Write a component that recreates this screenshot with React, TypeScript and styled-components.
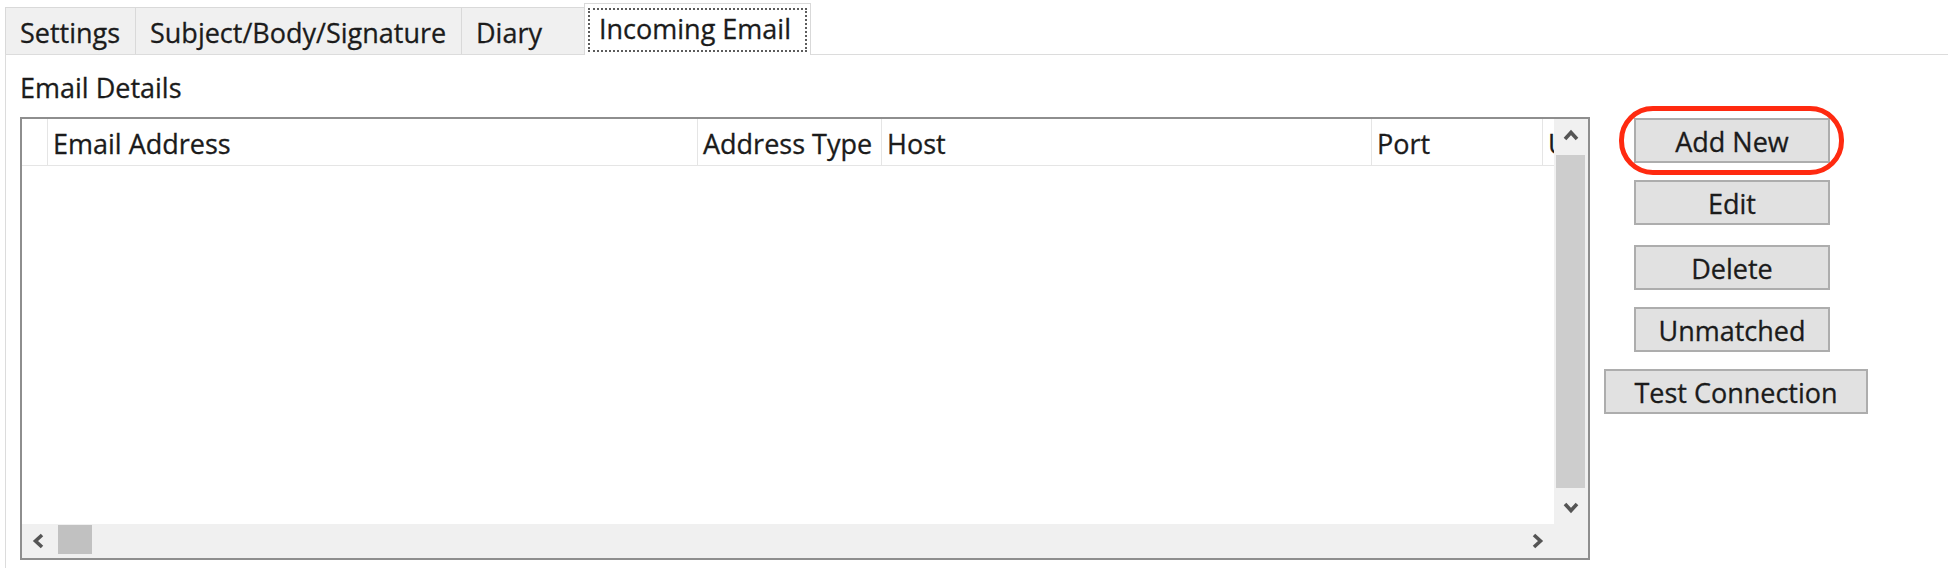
import React from 'react';
import styled, { createGlobalStyle } from 'styled-components';

const GlobalStyle = createGlobalStyle`
  html, body {
    margin: 0;
    padding: 0;
    background: #ffffff;
  }

  body {
    font-family: "Open Sans", "Noto Sans", sans-serif;
    font-size: 27px;
    color: #1b1b1b;
    -webkit-text-stroke: 0.3px #1b1b1b;
  }
`;

const Window = styled.div`
  width: 1948px;
  height: 568px;
  overflow: hidden;
  display: flex;
  flex-direction: column;
`;

const TabStrip = styled.div`
  display: flex;
  align-items: flex-end;
  height: 54px;
  padding-left: 5px;
  position: relative;
  z-index: 1;
`;

const Tab = styled.div<{ $width: number }>`
  box-sizing: border-box;
  width: ${p => p.$width}px;
  height: 47px;
  margin-right: -1px;
  padding: 7px 0 0 14px;
  background: #f0f0f0;
  border: 1px solid #d9d9d9;
  border-bottom: none;
  line-height: 36px;
  white-space: nowrap;
`;

const ActiveTab = styled.div<{ $width: number }>`
  box-sizing: border-box;
  width: ${p => p.$width}px;
  height: 52px;
  margin: 0 0 -1px -1px;
  padding: 4px 3px 3px 3px;
  background: #ffffff;
  border: 1px solid #d9d9d9;
  border-bottom: none;
  display: flex;
`;

const FocusBox = styled.div`
  flex: 1;
  border: 2px dotted #5c5c5c;
  padding: 1px 0 0 9px;
  line-height: 36px;
  white-space: nowrap;
`;

const Panel = styled.div`
  flex: 1;
  margin-left: 5px;
  border-top: 1px solid #dcdcdc;
  border-left: 1px solid #dcdcdc;
  padding: 15px 0 0 14px;
`;

const GroupLabel = styled.div`
  line-height: 36px;
  margin-bottom: 11px;
`;

const Body = styled.div`
  display: flex;
  align-items: flex-start;
  gap: 14px;
`;

const ListBox = styled.div`
  box-sizing: border-box;
  width: 1570px;
  height: 443px;
  border: 2px solid #8e8e8e;
  display: grid;
  grid-template-columns: 1fr 34px;
  grid-template-rows: 1fr 34px;
  background: #ffffff;
`;

const Grid = styled.div`
  overflow: hidden;
  background: #ffffff;
`;

const HeaderRow = styled.div`
  display: flex;
  height: 46px;
  border-bottom: 1px solid #e5e5e5;
`;

const HeaderCell = styled.div<{ $width: number; $first?: boolean }>`
  box-sizing: border-box;
  flex: 0 0 ${p => p.$width}px;
  display: flex;
  align-items: center;
  padding: 4px 0 0 5px;
  border-left: ${p => (p.$first ? 'none' : '1px solid #e5e5e5')};
  overflow: hidden;
  white-space: nowrap;
  line-height: 36px;
`;

const VScroll = styled.div`
  display: flex;
  flex-direction: column;
  background: #f0f0f0;
`;

const HScroll = styled.div`
  display: flex;
  background: #f0f0f0;
`;

const Corner = styled.div`
  background: #f0f0f0;
`;

const ArrowBox = styled.div<{ $size: number }>`
  flex: 0 0 ${p => p.$size}px;
  display: flex;
  align-items: center;
  justify-content: center;
`;

const VThumb = styled.div`
  height: 333px;
  margin: 2px 3px 0 2px;
  background: #cdcdcd;
`;

const HThumb = styled.div`
  width: 34px;
  margin: 1px 0 4px 2px;
  background: #c1c1c1;
`;

const Spacer = styled.div`
  flex: 1;
`;

const ButtonColumn = styled.div`
  width: 264px;
  padding-top: 1px;
  display: flex;
  flex-direction: column;
  align-items: flex-start;
  gap: 17px;
`;

const Button = styled.button<{ $wide?: boolean; $gapAbove?: number }>`
  box-sizing: border-box;
  width: ${p => (p.$wide ? 264 : 196)}px;
  height: 45px;
  margin-left: ${p => (p.$wide ? 0 : 30)}px;
  margin-top: ${p => p.$gapAbove || 0}px;
  padding: 2px 0 0;
  background: #e1e1e1;
  border: 2px solid #adadad;
  font-family: inherit;
  font-size: 27px;
  line-height: 36px;
  color: #1b1b1b;
  -webkit-text-stroke: 0.3px #1b1b1b;
`;

const Marked = styled.div`
  position: relative;
  margin-left: 30px;

  ${Button} {
    margin-left: 0;
  }

  &::after {
    content: '';
    position: absolute;
    top: -12px;
    bottom: -12px;
    left: -15px;
    right: -14px;
    border: 5px solid #ff2a10;
    border-radius: 34px;
    pointer-events: none;
  }
`;

type Dir = 'up' | 'down' | 'left' | 'right';

const chevronPoints: Record<Dir, string> = {
  up: '2,11 8,4.5 14,11',
  down: '2,5 8,11.5 14,5',
  left: '11,2 4.5,8 11,14',
  right: '5,2 11.5,8 5,14',
};

const Chevron = ({ dir }: { dir: Dir }) => (
  <svg width="16" height="16" viewBox="0 0 16 16">
    <polyline
      points={chevronPoints[dir]}
      fill="none"
      stroke="#555555"
      strokeWidth="3.6"
      strokeLinejoin="miter"
    />
  </svg>
);

const columns = [
  { title: '', width: 25 },
  { title: 'Email Address', width: 650 },
  { title: 'Address Type', width: 184 },
  { title: 'Host', width: 490 },
  { title: 'Port', width: 171 },
  { title: 'Username', width: 200 },
];

export default function App() {
  return (
    <>
      <GlobalStyle />
      <Window>
        <TabStrip>
          <Tab $width={131}>Settings</Tab>
          <Tab $width={327}>Subject/Body/Signature</Tab>
          <Tab $width={125}>Diary</Tab>
          <ActiveTab $width={227}>
            <FocusBox>Incoming Email</FocusBox>
          </ActiveTab>
        </TabStrip>
        <Panel>
          <GroupLabel>Email Details</GroupLabel>
          <Body>
            <ListBox>
              <Grid>
                <HeaderRow>
                  {columns.map((c, i) => (
                    <HeaderCell key={i} $width={c.width} $first={i === 0}>
                      {c.title}
                    </HeaderCell>
                  ))}
                </HeaderRow>
              </Grid>
              <VScroll>
                <ArrowBox $size={34}><Chevron dir="up" /></ArrowBox>
                <VThumb />
                <Spacer />
                <ArrowBox $size={35}><Chevron dir="down" /></ArrowBox>
              </VScroll>
              <HScroll>
                <ArrowBox $size={34}><Chevron dir="left" /></ArrowBox>
                <HThumb />
                <Spacer />
                <ArrowBox $size={34}><Chevron dir="right" /></ArrowBox>
              </HScroll>
              <Corner />
            </ListBox>
            <ButtonColumn>
              <Marked>
                <Button>Add New</Button>
              </Marked>
              <Button>Edit</Button>
              <Button $gapAbove={3}>Delete</Button>
              <Button>Unmatched</Button>
              <Button $wide>Test Connection</Button>
            </ButtonColumn>
          </Body>
        </Panel>
      </Window>
    </>
  );
}
